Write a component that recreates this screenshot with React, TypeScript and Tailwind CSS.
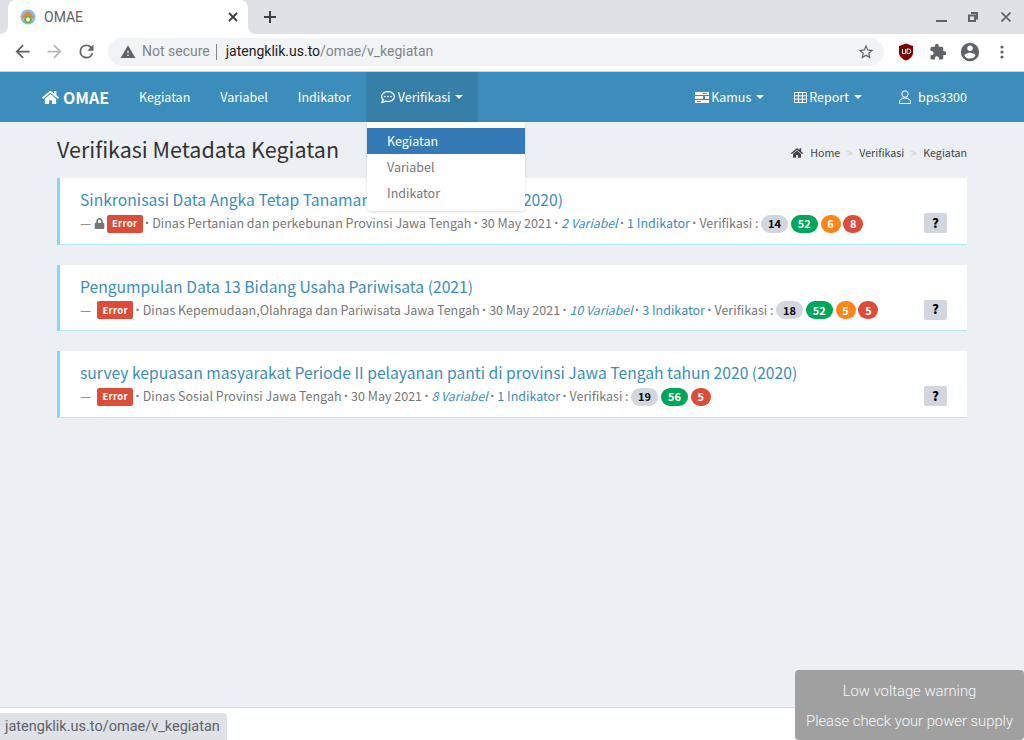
import React from "react";
import { FaHome, FaLock, FaRegCommentDots } from "react-icons/fa";

const src = "font-['Noto_Sans_CJK_SC','Source_Sans_Pro',sans-serif]";

function Caret({ m = "ml-[5px]" }: { m?: string }) {
  return <span className={`${m} inline-block h-0 w-0 border-x-[4px] border-t-[4px] border-x-transparent border-t-current align-middle`} />;
}

function Dot() {
  return <span className="inline-block w-[9.5px] text-center font-['Liberation_Sans',sans-serif] text-[14px] font-bold text-[#777]">·</span>;
}

function Pill({ n, c, wide }: { n: number; c: string; wide?: boolean }) {
  return (
    <span className={`inline-flex h-[18px] shrink-0 items-center justify-center rounded-full text-[11px] font-bold leading-none ${wide ? "w-[27px]" : "w-[20px]"} ${c}`}>
      {n}
    </span>
  );
}

type Item = {
  title: string;
  lock?: boolean;
  org: string;
  date: string;
  vars: string;
  ind: string;
  pills: [number, number, number | null, number];
};

const items: Item[] = [
  {
    title: "Sinkronisasi Data Angka Tetap Tanaman Pangan dan Ternak (2020)",
    lock: true,
    org: "Dinas Pertanian dan perkebunan Provinsi Jawa Tengah",
    date: "30 May 2021",
    vars: "2 Variabel",
    ind: "1 Indikator",
    pills: [14, 52, 6, 8],
  },
  {
    title: "Pengumpulan Data 13 Bidang Usaha Pariwisata (2021)",
    org: "Dinas Kepemudaan,Olahraga dan Pariwisata Jawa Tengah",
    date: "30 May 2021",
    vars: "10 Variabel",
    ind: "3 Indikator",
    pills: [18, 52, 5, 5],
  },
  {
    title: "survey kepuasan masyarakat Periode II pelayanan panti di provinsi Jawa Tengah tahun 2020 (2020)",
    org: "Dinas Sosial Provinsi Jawa Tengah",
    date: "30 May 2021",
    vars: "8 Variabel",
    ind: "1 Indikator",
    pills: [19, 56, null, 5],
  },
];

function Card({ it }: { it: Item }) {
  return (
    <div className="relative h-[66.5px] border-b border-l-[3px] border-b-[#b5e8f7] border-l-[#7fdcf7] bg-white pl-[20px]">
      <div className="pt-[10px] text-[15.68px] leading-[24px] text-[#3c8dbc]">{it.title}</div>
      <div className="-mt-[0.5px] flex h-[24px] items-center whitespace-pre text-[12.5px] text-[#777]">
        <span>—</span>
        {it.lock ? <FaLock className="ml-[3px] shrink-0 text-[11px] text-[#777]" /> : null}
        <span className={`inline-flex h-[18px] w-[36px] shrink-0 items-center justify-center rounded-[2px] bg-[#dd4b39] text-[9.5px] font-bold tracking-[0.3px] text-white ${it.lock ? "ml-[1.5px]" : "ml-[6px]"}`}>Error</span>
        <Dot />
        <span>{it.org}</span>
        <Dot />
        <span>{it.date}</span>
        <Dot />
        <span className="text-[12.3px] italic text-[#3c8dbc]">{it.vars}</span>
        <Dot />
        <span className="text-[#3c8dbc]">{it.ind}</span>
        <Dot />
        <span>Verifikasi :</span>
        <span className="ml-[2.5px] flex items-center gap-[2.8px]">
          <Pill n={it.pills[0]} c="bg-[#d2d6de] text-black" wide />
          <Pill n={it.pills[1]} c="bg-[#00a65a] text-white" wide />
          {it.pills[2] !== null && <Pill n={it.pills[2]} c="bg-[#ff851b] text-white" />}
          <Pill n={it.pills[3]} c="bg-[#dd4b39] text-white" />
        </span>
      </div>
      <span className="absolute right-[20px] top-[35px] flex h-[20px] w-[23px] items-center justify-center rounded-[2px] bg-[#d2d6de] pb-[2px] text-[13px] font-black leading-none text-black">?</span>
    </div>
  );
}

function TabStrip() {
  return (
    <div className="relative flex h-[34px] items-end bg-[#dee1e6]">
      <div className="relative ml-[8px] flex h-[34px] w-[240px] items-center rounded-t-[8px] bg-white pl-[12px]">
        <svg className="absolute -left-[8px] bottom-0" width="8" height="8" viewBox="0 0 8 8"><path d="M8 0v8H0a8 8 0 0 0 8-8z" fill="#fff" /></svg>
        <svg className="absolute -right-[8px] bottom-0" width="8" height="8" viewBox="0 0 8 8"><path d="M0 0v8h8a8 8 0 0 1-8-8z" fill="#fff" /></svg>
        <svg width="16" height="16" viewBox="0 0 16 16">
          <circle cx="8" cy="8" r="7.500" fill="#8fb8dc" />
          <path d="M1 8.500 8 2l7 6.500z" fill="#e8843c" />
          <circle cx="8" cy="10.500" r="3.800" fill="#6cb33f" />
          <circle cx="8" cy="10.500" r="1.900" fill="#fff" />
        </svg>
        <span className="ml-[8px] font-['Roboto',sans-serif] text-[14px] text-[#5f6368]">OMAE</span>
        <svg className="absolute right-[10px] top-[12px]" width="10" height="10" viewBox="0 0 10 10"><path d="M1 1l8 8M9 1l-8 8" stroke="#3c4043" strokeWidth="1.8" /></svg>
      </div>
      <svg className="absolute left-[264px] top-[11px]" width="12" height="12" viewBox="0 0 12 12"><path d="M6 0v12M0 6h12" stroke="#3c4043" strokeWidth="2" /></svg>
      <svg className="absolute left-[936px] top-[20px]" width="11" height="2" viewBox="0 0 11 2"><path d="M0 1h11" stroke="#5f6368" strokeWidth="2" /></svg>
      <svg className="absolute left-[968px] top-[12px]" width="10" height="10" viewBox="0 0 10 10"><path d="M3 1h6v5.500H7M1 3.500h6V9H1z" fill="none" stroke="#5f6368" strokeWidth="2" /></svg>
      <svg className="absolute left-[1001px] top-[12px]" width="10" height="10" viewBox="0 0 10 10"><path d="M.5.5l9 9M9.500.5l-9 9" stroke="#5f6368" strokeWidth="1.600" /></svg>
    </div>
  );
}

function Toolbar() {
  return (
    <div className="relative flex h-[38px] items-center border-b border-b-[#c9d5de] bg-white pb-[2px]">
      <svg className="absolute left-[12px] top-[7px]" width="21" height="21" viewBox="0 0 24 24"><path d="M20 11H7.830l5.590-5.590L12 4l-8 8 8 8 1.410-1.410L7.830 13H20z" fill="#5f6368" /></svg>
      <svg className="absolute left-[44px] top-[7px]" width="21" height="21" viewBox="0 0 24 24"><path d="M12 4l-1.410 1.410L16.170 11H4v2h12.170l-5.580 5.590L12 20l8-8z" fill="#b4b7bb" /></svg>
      <svg className="absolute left-[76px] top-[7px]" width="21" height="21" viewBox="0 0 24 24"><path d="M17.650 6.350A7.960 7.960 0 0 0 12 4a8 8 0 1 0 7.730 10h-2.080A6 6 0 1 1 12 6c1.660 0 3.140.690 4.220 1.780L13 11h7V4z" fill="#5f6368" /></svg>
      <div className="ml-[108px] flex h-[28px] w-[776px] items-center rounded-full bg-[#f1f3f4] pl-[12px] font-['Roboto',sans-serif] text-[14px]">
        <svg width="16" height="16" viewBox="0 0 24 24"><path d="M1 21h22L12 2zm12-3h-2v-2h2zm0-4h-2v-4h2z" fill="#5f6368" /></svg>
        <span className="ml-[6px] text-[#80868b]">Not secure</span>
        <span className="mx-[6px] h-[16px] w-px bg-[#80868b]" />
        <span className="ml-[3px] text-[#202124]">jatengklik.us.to</span>
        <span className="text-[#80868b]">/omae/v_kegiatan</span>
      </div>
      <svg className="absolute left-[857px] top-[9px]" width="18" height="18" viewBox="0 0 24 24"><path d="M22 9.240l-7.190-.620L12 2 9.190 8.630 2 9.240l5.460 4.730L5.820 21 12 17.270 18.180 21l-1.630-7.030zM12 15.400l-3.760 2.270 1-4.280-3.320-2.880 4.380-.380L12 6.100l1.710 4.040 4.380.380-3.320 2.880 1 4.280z" fill="#5f6368" /></svg>
      <svg className="absolute left-[898px] top-[9px]" width="16" height="18" viewBox="0 0 16 18"><path d="M8 .5l7 2.400v6.600c0 3.800-3 6.600-7 8-4-1.400-7-4.200-7-8V2.900z" fill="#800000" /><path d="M4.500 6v4.500h3V6M9 10.500V6h1.500a2.200 2.200 0 0 1 0 4.500z" fill="none" stroke="#fff" strokeWidth="1" /></svg>
      <svg className="absolute left-[929px] top-[9px]" width="18" height="18" viewBox="0 0 24 24"><path d="M20.500 11H19V7a2 2 0 0 0-2-2h-4V3.500a2.500 2.500 0 0 0-5 0V5H4a2 2 0 0 0-2 2v3.800h1.500a2.700 2.700 0 0 1 0 5.400H2V20a2 2 0 0 0 2 2h3.800v-1.500a2.700 2.700 0 0 1 5.400 0V22H17a2 2 0 0 0 2-2v-4h1.500a2.500 2.500 0 0 0 0-5z" fill="#5f6368" /></svg>
      <svg className="absolute left-[959px] top-[7px]" width="22" height="22" viewBox="0 0 24 24"><path d="M12 2a10 10 0 1 0 0 20 10 10 0 0 0 0-20zm0 3a3 3 0 1 1 0 6 3 3 0 0 1 0-6zm0 14.200a7.200 7.200 0 0 1-6-3.220c.03-1.990 4-3.080 6-3.080s5.970 1.090 6 3.080a7.200 7.200 0 0 1-6 3.220z" fill="#5f6368" /></svg>
      <svg className="absolute left-[1000px] top-[10px]" width="4" height="16" viewBox="0 0 4 16"><circle cx="2" cy="3" r="1.600" fill="#5f6368" /><circle cx="2" cy="8" r="1.600" fill="#5f6368" /><circle cx="2" cy="13" r="1.600" fill="#5f6368" /></svg>
    </div>
  );
}

function Navbar() {
  return (
    <div className="relative flex h-[50px] items-center bg-[#3c8dbc] text-[12.5px] text-white">
      <div className="ml-[42px] flex items-center text-[16px] font-bold">
        <FaHome className="mr-[4px] text-[17px]" />
        <span>OMAE</span>
      </div>
      <div className="ml-[15px] flex h-full items-center">
        <span className="px-[15px]">Kegiatan</span>
        <span className="px-[15px]">Variabel</span>
        <span className="px-[15px]">Indikator</span>
        <span className="flex h-full items-center bg-[#367fa9] px-[15px]">
          <FaRegCommentDots className="mr-[3px] text-[14px]" />
          Verifikasi
          <Caret m="ml-[4px]" />
        </span>
      </div>
      <div className="ml-auto flex h-full items-center pr-[57px]">
        <span className="flex items-center">
          <svg className="mr-[2px]" width="14" height="11" viewBox="0 0 14 11" fill="white">
            <path d="M0 0h14v3H0z" />
            <path d="M0 4h8v3H0zM10 4h4v3h-4z" />
            <path d="M0 8h14v3H0z" />
            <path d="M8 1h4v1H8zM2 9h4v1H2z" fill="#3c8dbc" />
          </svg>
          Kamus
          <Caret />
        </span>
        <span className="ml-[30px] flex items-center">
          <svg className="mr-[2px]" width="13" height="11" viewBox="0 0 13 11" fill="none" stroke="white" strokeWidth="1">
            <path d="M.5.5h12v10H.5zM.5 3.830h12M.5 7.170h12M4.500.5v10M8.500.5v10" />
          </svg>
          Report
          <Caret />
        </span>
        <span className="ml-[36px] flex items-center">
          <svg className="mr-[6px]" width="14" height="14" viewBox="0 0 14 14" fill="none" stroke="currentColor" strokeWidth="1"><circle cx="7" cy="4" r="3.200" /><path d="M1.500 13.500V12c0-2.400 2-4 5.500-4s5.500 1.600 5.500 4v1.500z" /></svg>
          bps3300
        </span>
      </div>
    </div>
  );
}

export default function App() {
  return (
    <div className={`relative flex h-[740px] w-[1024px] flex-col overflow-hidden bg-[#ecf0f5] ${src}`}>
      <TabStrip />
      <Toolbar />
      <Navbar />
      <div className="flex-1 px-[57px]">
        <div className="flex h-[56px] items-center justify-between">
          <h1 className="pb-[2px] text-[21.5px] font-normal text-[#333]">Verifikasi Metadata Kegiatan</h1>
          <div className="flex items-center pt-[6px] text-[10.7px] text-[#444]">
            <FaHome className="mr-[7px] text-[12px]" />
            <span>Home</span>
            <span className="mx-[6.5px] text-[#ccc]">&gt;</span>
            <span>Verifikasi</span>
            <span className="mx-[6.5px] text-[#ccc]">&gt;</span>
            <span>Kegiatan</span>
          </div>
        </div>
        <div className="flex flex-col gap-[20px]">
          {items.map((it) => <Card key={it.title} it={it} />)}
        </div>
      </div>
      <div className="h-[33px] border-t border-t-[#d2d6de] bg-white" />

      <div className="absolute left-[367px] top-[122px] w-[158px] rounded-b-[4px] bg-white pb-[5px] pt-[6px] text-[12.5px] text-[#777] shadow-[0_1px_3px_rgba(0,0,0,0.15)]">
        <div className="flex h-[26px] items-center bg-[#337ab7] pl-[20px] text-white">Kegiatan</div>
        <div className="flex h-[26px] items-center pl-[20px]">Variabel</div>
        <div className="flex h-[26px] items-center pl-[20px]">Indikator</div>
      </div>

      <div className="absolute bottom-0 left-0 flex h-[27px] w-[227px] items-center rounded-tr-[4px] bg-[#dee1e6] pl-[5px] font-['Roboto',sans-serif] text-[14.5px] text-[#5f6368]">
        jatengklik.us.to/omae/v_kegiatan
      </div>

      <div className="absolute bottom-0 right-0 flex h-[70px] w-[229px] flex-col items-center justify-center rounded-[4px] bg-[#a0a0a0] pt-[2px] font-['Roboto',sans-serif] text-[14.8px] font-light leading-[30px] text-[#f4f8fc]">
        <div>Low voltage warning</div>
        <div>Please check your power supply</div>
      </div>
    </div>
  );
}
